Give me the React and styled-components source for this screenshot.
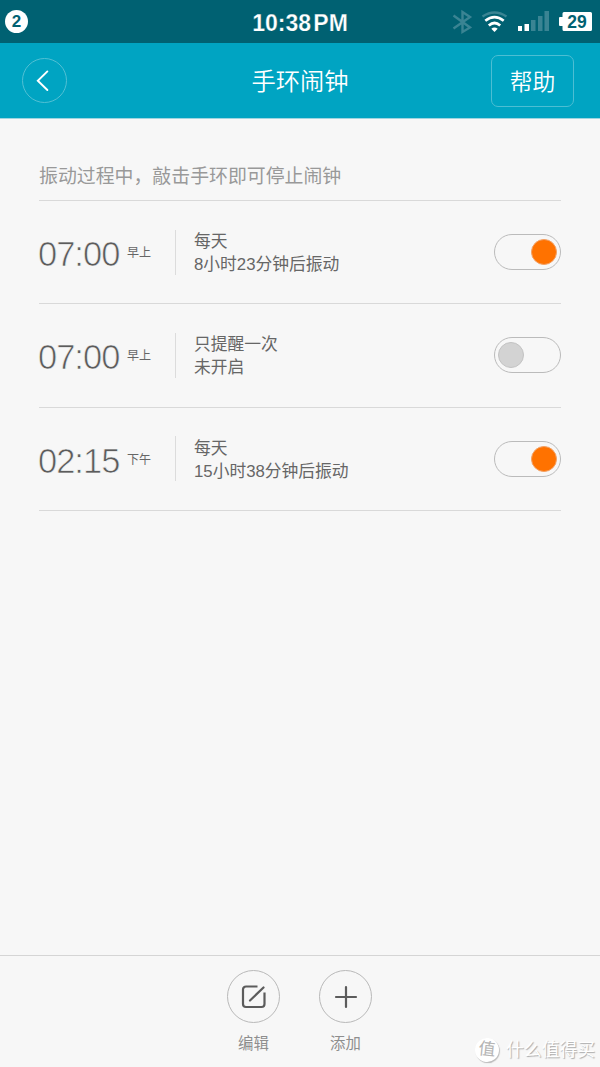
import styled, { createGlobalStyle } from "styled-components"

const GlobalStyle = createGlobalStyle`
    * {
        box-sizing: border-box;
    }
    body {
        margin: 0;
        background: #f7f7f7;
        font-family: "Liberation Sans", "Noto Sans CJK SC", sans-serif;
    }
`

const Screen = styled.div`
    position: relative;
    display: flex;
    flex-direction: column;
    width: 600px;
    height: 1067px;
    overflow: hidden;
    background: #f7f7f7;
`

const StatusBar = styled.div`
    display: grid;
    grid-template-columns: 1fr auto 1fr;
    align-items: center;
    height: 43px;
    padding: 0 8px 0 5px;
    background: #006172;
    color: #fff;
`

const Count = styled.span`
    display: flex;
    align-items: center;
    justify-content: center;
    width: 23px;
    height: 23px;
    border-radius: 50%;
    background: #fff;
    color: #006172;
    font-size: 17px;
    font-weight: bold;
`

const Clock = styled.span`
    font-size: 23px;
    font-weight: bold;
    line-height: 26px;
    padding: 2px 0 0 3px;
    word-spacing: -4px;
    -webkit-text-stroke: 0.25px #006172;
`

const StatusIcons = styled.div`
    display: flex;
    justify-content: flex-end;
    align-items: center;
`

const Header = styled.header`
    display: grid;
    grid-template-columns: 1fr auto 1fr;
    align-items: center;
    height: 75px;
    padding: 0 26px 0 22px;
    background: #00a4c2;
    color: #fff;
    box-shadow: 0 1px 0 #9fd5e0;
`

const BackButton = styled.button`
    display: flex;
    align-items: center;
    justify-content: center;
    width: 45px;
    height: 45px;
    padding: 0;
    border: 1px solid #52c0d4;
    border-radius: 50%;
    background: none;
`

const Title = styled.h1`
    margin: 0;
    padding: 2px 0 0 4px;
    font-size: 24.3px;
    font-weight: 350;
    line-height: 30px;
`

const HelpButton = styled.button`
    justify-self: end;
    width: 83px;
    height: 52px;
    padding: 0;
    border: 1px solid #4dbed3;
    border-radius: 7px;
    background: none;
    color: #fff;
    font-family: inherit;
    font-size: 22.8px;
    font-weight: 350;
`

const Content = styled.main`
    flex: 1;
    padding: 44px 39px 0;
`

const Hint = styled.p`
    margin: 0;
    height: 39px;
    padding-top: 2px;
    border-bottom: 1px solid #d9d9d9;
    color: #999;
    font-size: 18.9px;
    line-height: 26px;
    white-space: nowrap;
`

const Alarm = styled.div`
    display: flex;
    align-items: center;
    height: 103.33px;
    border-bottom: 1px solid #d9d9d9;
    color: #666;
`

const Time = styled.div`
    width: 88px;
    color: #5c5c5c;
    font-size: 34.5px;
    letter-spacing: -1px;
    line-height: 40px;
    padding-top: 4px;
    text-indent: -1px;
    -webkit-text-stroke: 0.7px #f7f7f7;
`

const Period = styled.div`
    width: 48px;
    padding-top: 2px;
    font-size: 12px;
    line-height: 16px;
`

const Detail = styled.div`
    flex: 1;
    height: 45px;
    padding: 0.4px 0 0 18px;
    border-left: 1px solid #dcdcdc;
    font-size: 16.75px;
    line-height: 23px;
`

const Switch = styled.div`
    display: flex;
    justify-content: ${({$on}) => $on ? "flex-end" : "flex-start"};
    align-items: center;
    width: 67px;
    height: 36px;
    padding: 0 3px;
    border: 1px solid #bbb;
    border-radius: 18px;
`

const Knob = styled.span`
    width: 26px;
    height: 26px;
    border-radius: 50%;
    border: 1px solid ${({$on}) => $on ? "#f3a064" : "#c3c3c3"};
    background: ${({$on}) => $on ? "#ff7200" : "#d3d3d3"};
`

const Footer = styled.footer`
    display: flex;
    justify-content: center;
    gap: 39px;
    height: 112px;
    padding: 14px 1px 0 0;
    border-top: 1px solid #d5d5d5;
`

const Action = styled.div`
    display: flex;
    flex-direction: column;
    align-items: center;
    gap: 10px;
    width: 53px;
    color: #8e8e8e;
    font-size: 15.4px;
    line-height: 22px;
`

const ActionCircle = styled.span`
    display: flex;
    align-items: center;
    justify-content: center;
    width: 53px;
    height: 53px;
    border: 1px solid #b9b9b9;
    border-radius: 50%;
`

const Watermark = styled.div`
    position: absolute;
    right: 5px;
    bottom: 4px;
    display: flex;
    align-items: center;
    gap: 7px;
    color: #fff;
    font-size: 17.8px;
    line-height: 26px;
    text-shadow: 1px 1px 1px #aaa;
`

const WatermarkLogo = styled.span`
    display: flex;
    align-items: center;
    justify-content: center;
    width: 24px;
    height: 24px;
    border-radius: 50%;
    background: #fff;
    box-shadow: 1px 1px 1px #bbb;
    color: #b4b4b4;
    font-size: 17px;
    text-shadow: none;
    transform: rotate(6deg);
`

const alarms = [
    { time: "07:00", period: "早上", repeat: "每天", status: "8小时23分钟后振动", on: true },
    { time: "07:00", period: "早上", repeat: "只提醒一次", status: "未开启", on: false },
    { time: "02:15", period: "下午", repeat: "每天", status: "15小时38分钟后振动", on: true },
]

const StatusGlyphs = () => (
    <svg width="140" height="43" viewBox="452 0 140 43" fill="none">
        <path d="M453.500 15.500 L470 27.500 L462.500 32 V12 L470 17 L453.500 28.500" stroke="#3a8493" strokeWidth="2.4" />
        <path d="M482.5 16.5 Q494.5 8.5 506.5 16.5" stroke="#3a8493" strokeWidth="2.4" />
        <g stroke="#fff" strokeWidth="2.7">
            <path d="M485.3 20.7 Q494.5 13.5 503.7 20.7" />
            <path d="M488.8 25.5 Q494.5 20.5 500.2 25.5" />
        </g>
        <path d="M491.3 28.7 Q494.5 26.5 497.7 28.7 L494.5 32 Z" fill="#fff" />
        <path d="M518 26h4v5h-4z M524.5 24h4.5v7h-4.5z" fill="#fff" />
        <path d="M531 20h4.5v11H531z M538 16h4.5v15H538z M544.5 11h4.5v20h-4.5z" fill="#3a8493" />
        <path d="M564 12h26.500a1.500 1.500 0 0 1 1.500 1.500v16a1.500 1.500 0 0 1-1.500 1.500H564a1.500 1.500 0 0 1-1.500-1.500V26H560a1 1 0 0 1-1-1v-7a1 1 0 0 1 1-1h2.500v-3.500a1.500 1.500 0 0 1 1.500-1.500z" fill="#fff" />
        <text x="577" y="28" textAnchor="middle" fill="#006172" fontFamily="Liberation Sans" fontWeight="bold" fontSize="17.500">29</text>
    </svg>
)

export default function App() {
    return (
        <>
            <GlobalStyle />
            <Screen>
                <StatusBar>
                    <Count>2</Count>
                    <Clock>10:38 PM</Clock>
                    <StatusIcons>
                        <StatusGlyphs />
                    </StatusIcons>
                </StatusBar>

                <Header>
                    <BackButton>
                        <svg width="45" height="45" viewBox="0 0 45 45" fill="none" stroke="#fff" strokeWidth="2" strokeLinecap="round">
                            <path d="M25.500 13 L15.500 22.700 L25.500 32.500" />
                        </svg>
                    </BackButton>
                    <Title>手环闹钟</Title>
                    <HelpButton>帮助</HelpButton>
                </Header>

                <Content>
                    <Hint>振动过程中，敲击手环即可停止闹钟</Hint>
                    {alarms.map((alarm, i) => (
                        <Alarm key={i}>
                            <Time>{alarm.time}</Time>
                            <Period>{alarm.period}</Period>
                            <Detail>
                                <div>{alarm.repeat}</div>
                                <div>{alarm.status}</div>
                            </Detail>
                            <Switch $on={alarm.on}>
                                <Knob $on={alarm.on} />
                            </Switch>
                        </Alarm>
                    ))}
                </Content>

                <Footer>
                    <Action>
                        <ActionCircle>
                            <svg width="26" height="26" viewBox="0 0 26 26" fill="none" stroke="#5c5c5c" strokeWidth="2.200">
                                <path d="M16.500 2.500H5A3 3 0 0 0 2 5.500V20a3 3 0 0 0 3 3h15.500a3 3 0 0 0 3-3V8.500" />
                                <path d="M9 16.500 L22.500 3.500" strokeLinecap="round" />
                            </svg>
                        </ActionCircle>
                        编辑
                    </Action>
                    <Action>
                        <ActionCircle>
                            <svg width="24" height="24" viewBox="0 0 24 24" fill="none" stroke="#5c5c5c" strokeWidth="2.200" strokeLinecap="round">
                                <path d="M12 2v20M2 12h20" />
                            </svg>
                        </ActionCircle>
                        添加
                    </Action>
                </Footer>

                <Watermark>
                    <WatermarkLogo>值</WatermarkLogo>
                    什么值得买
                </Watermark>
            </Screen>
        </>
    )
}
